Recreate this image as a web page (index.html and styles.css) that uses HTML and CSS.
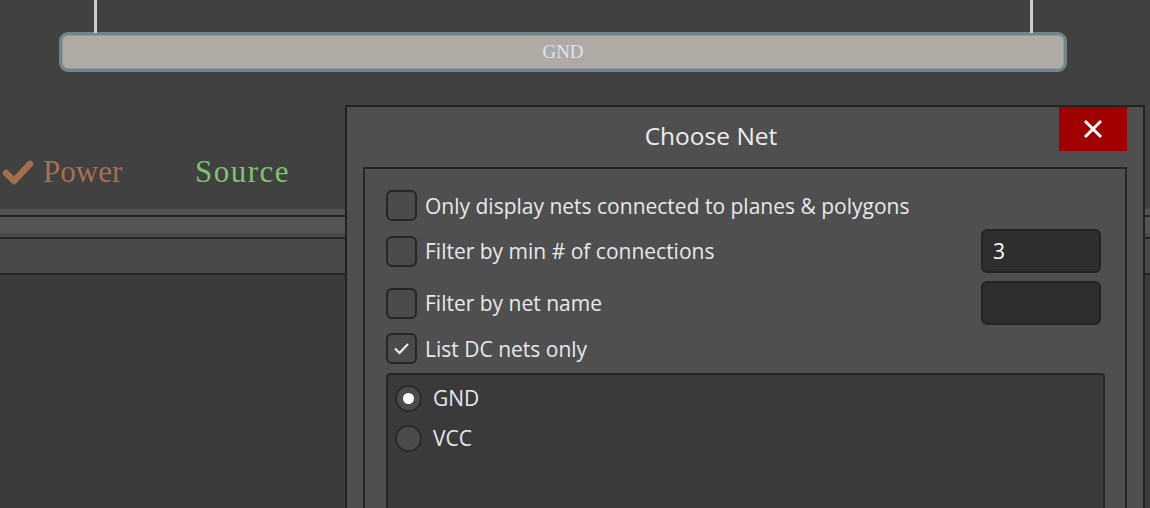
FILE: index.html
```html
<!DOCTYPE html>
<html>
<head>
<meta charset="utf-8">
<title>Choose Net</title>
<link rel="stylesheet" href="styles.css">
</head>
<body>
<div class="app">
  <div class="canvas">
    <div class="wire wire-a"></div>
    <div class="wire wire-b"></div>
    <div class="bus">GND</div>
  </div>
  <div class="tabs">
    <div class="tab tab-power">
      <svg class="tick" width="32" height="28" viewBox="0 0 32 28"><polyline points="4,15 12,23 28,6" fill="none" stroke="#a66f4c" stroke-width="6.5" stroke-linecap="round" stroke-linejoin="round"/></svg>
      <span>Power</span>
    </div>
    <div class="tab tab-source">Source</div>
  </div>
  <div class="bands">
    <div class="band b1"></div>
    <div class="line"></div>
    <div class="band b2"></div>
    <div class="band b3"></div>
    <div class="line"></div>
    <div class="band b4"></div>
    <div class="line"></div>
    <div class="rest"></div>
  </div>

  <div class="dialog">
    <div class="titlebar">
      <div class="title">Choose Net</div>
      <div class="close"><svg width="22" height="22" viewBox="0 0 22 22"><path d="M3 3 L19 19 M19 3 L3 19" stroke="#ffffff" stroke-width="3" fill="none"/></svg></div>
    </div>
    <div class="group">
      <div class="row">
        <span class="cb"></span><span class="label">Only display nets connected to planes &amp; polygons</span>
      </div>
      <div class="row">
        <span class="cb"></span><span class="label">Filter by min # of connections</span>
        <div class="field">3</div>
      </div>
      <div class="row">
        <span class="cb"></span><span class="label">Filter by net name</span>
        <div class="field"></div>
      </div>
      <div class="row">
        <span class="cb checked"><svg width="17" height="13" viewBox="0 0 17 13"><polyline points="2,6.5 6.5,11 15,2" fill="none" stroke="#f0f0f0" stroke-width="2"/></svg></span><span class="label">List DC nets only</span>
      </div>
      <div class="list">
        <div class="opt"><span class="radio on"></span><span class="label">GND</span></div>
        <div class="opt"><span class="radio"></span><span class="label">VCC</span></div>
      </div>
    </div>
  </div>
</div>
</body>
</html>
```

FILE: styles.css
```css
html, body {
  margin: 0;
  padding: 0;
  background: #414141;
  overflow: hidden;
}
.app {
  position: relative;
  width: 1150px;
  height: 508px;
  display: flex;
  flex-direction: column;
  background: #414141;
}
.canvas {
  position: relative;
  height: 105px;
  padding: 32px 0 0 59px;
  box-sizing: border-box;
}
.wire {
  position: absolute;
  top: 0;
  width: 3px;
  height: 33px;
  background: #cdcdcd;
}
.wire-a { left: 94px; }
.wire-b { left: 1030px; }
.bus {
  width: 1008px;
  height: 40px;
  box-sizing: border-box;
  border: 3px solid #6f848b;
  border-radius: 9px;
  box-shadow: inset 0 0 0 1px #8f9a9c;
  background: #afaaa3;
  color: #d6e6f2;
  font-family: "Liberation Serif", serif;
  font-size: 19px;
  display: flex;
  align-items: center;
  justify-content: center;
}
.tabs {
  height: 104px;
  box-sizing: border-box;
  padding: 30px 0 0 2px;
  display: flex;
  align-items: center;
  font-family: "Liberation Serif", serif;
  font-size: 31px;
}
.tab-power {
  width: 193px;
  display: flex;
  align-items: center;
  gap: 9px;
  color: #a86f53;
}
.tick { display: block; }
.tab-source { color: #7cc667; letter-spacing: 1.5px; }
.bands {
  flex: 1;
  display: flex;
  flex-direction: column;
}
.band.b1 { height: 6px; background: #525252; }
.line { height: 2px; background: #262626; }
.band.b2 { height: 16px; background: #545454; }
.band.b3 { height: 4px; background: #4a4a4a; }
.band.b4 { height: 34px; background: #484848; }
.rest { flex: 1; background: #3b3b3b; }

.dialog {
  position: absolute;
  left: 345px;
  top: 105px;
  width: 800px;
  height: 440px;
  box-sizing: border-box;
  border: 2px solid #222222;
  background: #4f4f4f;
  display: flex;
  flex-direction: column;
  font-family: "Open Sans", "Noto Sans", sans-serif;
  color: #e6e8ec;
}
.titlebar {
  height: 60px;
  flex: none;
  display: flex;
  padding: 0 16px;
}
.title {
  flex: 1;
  text-align: center;
  font-size: 24.5px;
  line-height: 58px;
  color: #ececec;
}
.close {
  width: 68px;
  height: 44px;
  background: #a00000;
  display: flex;
  align-items: center;
  justify-content: center;
}
.close svg { display: block; }
.group {
  flex: 1;
  margin: 0 16px;
  border: 2px solid #262626;
  padding: 21px 20px 0 21px;
  display: flex;
  flex-direction: column;
  gap: 8px;
}
.row {
  display: flex;
  align-items: center;
  min-height: 31px;
}
.label {
  font-size: 21px;
  line-height: 26px;
}
.row .label { margin-left: 8px; }
.cb {
  width: 31px;
  height: 31px;
  box-sizing: border-box;
  border: 2px solid #262626;
  border-radius: 6px;
  background: #4b4b4b;
  display: flex;
  align-items: center;
  justify-content: center;
  flex: none;
}
.cb svg { display: block; }
.field {
  margin-left: auto;
  margin-right: 4px;
  width: 120px;
  height: 44px;
  box-sizing: border-box;
  border: 2px solid #232323;
  border-radius: 6px;
  background: #2e2e2e;
  color: #ffffff;
  font-size: 21px;
  padding-left: 10px;
  display: flex;
  align-items: center;
}
.list {
  margin-top: 1px;
  flex: 1;
  border: 2px solid #262626;
  border-bottom: none;
  border-radius: 4px 4px 0 0;
  background: #3a3a3a;
  padding: 3px 0 0 7px;
}
.opt {
  height: 40px;
  display: flex;
  align-items: center;
}
.opt .label { margin-left: 11px; }
.radio {
  width: 27px;
  height: 27px;
  box-sizing: border-box;
  border-radius: 50%;
  border: 2px solid #2a2a2a;
  background: #4b4b4b;
  display: flex;
  align-items: center;
  justify-content: center;
  flex: none;
}
.radio.on::after {
  content: "";
  width: 11px;
  height: 11px;
  border-radius: 50%;
  background: #ffffff;
}
```
